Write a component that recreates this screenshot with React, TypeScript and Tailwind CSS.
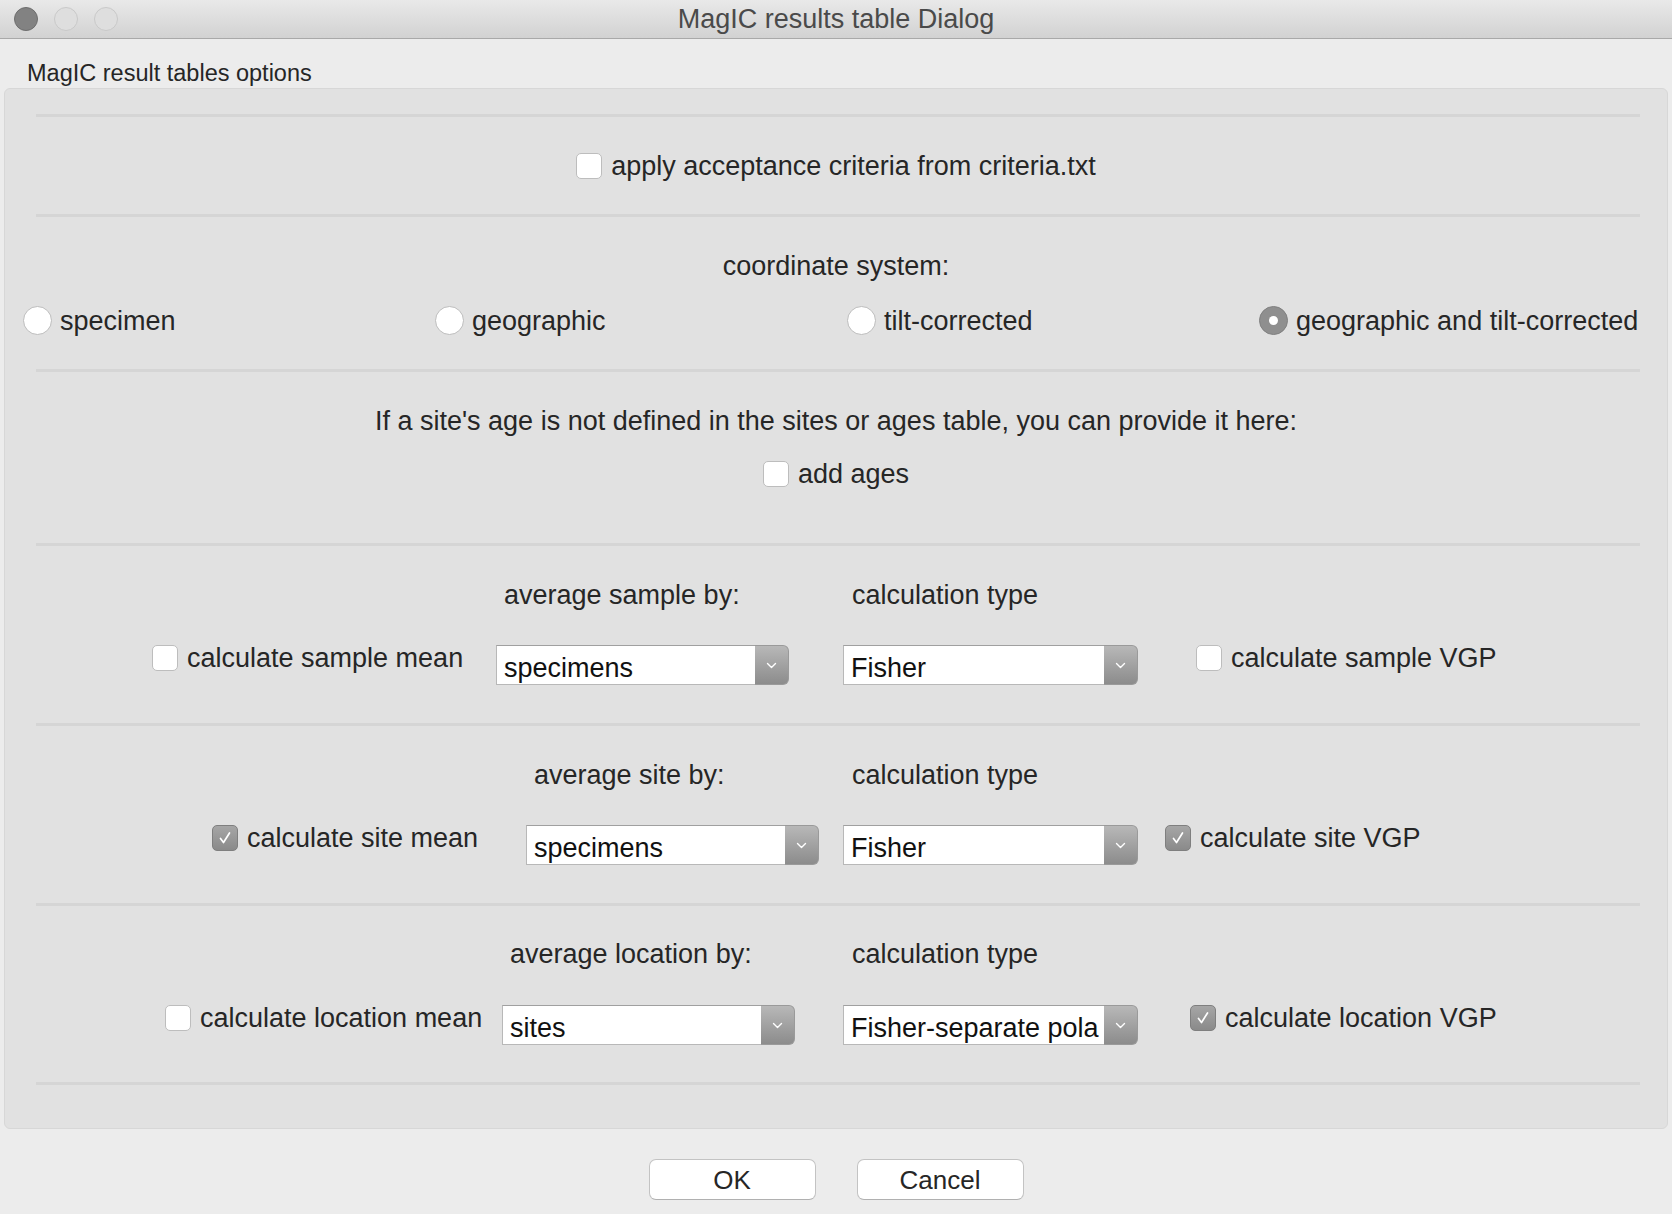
import React from "react";

function Box({ checked }: { checked?: boolean }) {
  if (checked) {
    return (
      <span className="flex h-[26px] w-[26px] shrink-0 items-center justify-center rounded-[5px] border border-[#7f7f7f] bg-linear-to-b from-[#a6a6a6] to-[#8a8a8a]">
        <svg width="16" height="16" viewBox="0 0 16 16">
          <path d="M3.5 8.5 L6.5 12.5 L12.5 3" fill="none" stroke="white" strokeWidth="1.7" strokeLinecap="round" strokeLinejoin="round" />
        </svg>
      </span>
    );
  }
  return <span className="h-[26px] w-[26px] shrink-0 rounded-[5px] border border-[#bdbdbd] bg-white" />;
}

function Check({ label, checked }: { label: string; checked?: boolean }) {
  return (
    <div className="flex h-[26px] items-center gap-[9px]">
      <Box checked={checked} />
      <span className="whitespace-nowrap text-[27px] leading-[30px]">{label}</span>
    </div>
  );
}

function Radio({ on, label }: { on?: boolean; label: string }) {
  return (
    <div className="flex h-[29px] items-center gap-[8px]">
      {on ? (
        <span className="flex h-[29px] w-[29px] shrink-0 items-center justify-center rounded-full border border-[#808080] bg-[#8f8f8f]">
          <span className="h-[9px] w-[9px] rounded-full bg-white" />
        </span>
      ) : (
        <span className="h-[29px] w-[29px] shrink-0 rounded-full border border-[#bcbcbc] bg-white" />
      )}
      <span className="whitespace-nowrap text-[27px] leading-[30px]">{label}</span>
    </div>
  );
}

function Select({ value, w }: { value: string; w: string }) {
  return (
    <div className={`flex h-[40px] shrink-0 ${w}`}>
      <div className="flex min-w-0 flex-1 items-end whitespace-nowrap border border-r-0 border-[#b8b8b8] border-t-[#a0a0a0] bg-white pl-[7px] text-[27px] leading-[32px] text-[#111]">
        {value}
      </div>
      <div className="flex w-[34px] shrink-0 items-center justify-center rounded-r-[6px] border border-l-0 border-[#9a9a9a] bg-linear-to-b from-[#b8b8b8] to-[#8c8c8c]">
        <svg width="11" height="7" viewBox="0 0 11 7">
          <path d="M1.5 1.5 L5.5 5.5 L9.5 1.5" fill="none" stroke="white" strokeWidth="1.4" strokeLinecap="round" strokeLinejoin="round" />
        </svg>
      </div>
    </div>
  );
}

function Sep() {
  return <div className="ml-[31px] mr-[27px] h-[3px] bg-[#d5d5d5]" />;
}

type RowSpec = {
  heading: string;
  hpl: string;
  hw: string;
  pl: string;
  g1w: string;
  meanLabel: string;
  meanChecked?: boolean;
  sel1: string;
  sp1: string;
  sel2: string;
  sp2: string;
  vgpLabel: string;
  vgpChecked?: boolean;
  h: string;
  pt: string;
  mt: string;
};

function ControlSection(r: RowSpec) {
  return (
    <div className={`flex flex-col ${r.h} ${r.pt}`}>
      <div className={`flex h-[32px] items-center ${r.hpl} text-[27px] leading-[32px]`}>
        <div className={`shrink-0 whitespace-nowrap ${r.hw}`}>{r.heading}</div>
        <div className="whitespace-nowrap">calculation type</div>
      </div>
      <div className={`flex items-start ${r.mt} ${r.pl}`}>
        <div className={`shrink-0 ${r.g1w}`}>
          <Check label={r.meanLabel} checked={r.meanChecked} />
        </div>
        <Select value={r.sel1} w="w-[293px]" />
        <div className={`shrink-0 ${r.sp1}`} />
        <Select value={r.sel2} w="w-[295px]" />
        <div className={`shrink-0 ${r.sp2}`} />
        <Check label={r.vgpLabel} checked={r.vgpChecked} />
      </div>
    </div>
  );
}

export default function App() {
  return (
    <div className="h-[1214px] w-[1672px] overflow-hidden bg-[#ececec] font-['Liberation_Sans',Arial,sans-serif] text-[#262626]">
      {/* Title bar */}
      <div className="grid h-[39px] grid-cols-[1fr_auto_1fr] items-center border-b border-[#a9a9a9] bg-linear-to-b from-[#e9e9e9] to-[#d2d2d2]">
        <div className="flex items-center gap-[16px] pl-[14px]">
          <span className="h-[24px] w-[24px] rounded-full border border-[#6e6e6e] bg-[#828282]" />
          <span className="h-[24px] w-[24px] rounded-full border border-[#c9c9c9] bg-[#dedede]" />
          <span className="h-[24px] w-[24px] rounded-full border border-[#c9c9c9] bg-[#dedede]" />
        </div>
        <div className="whitespace-nowrap text-[27px] leading-[32px] text-[#4a4a4a]">MagIC results table Dialog</div>
        <div />
      </div>

      {/* Group label */}
      <div className="pl-[27px] pt-[20px] text-[23.5px] leading-[28px]">MagIC result tables options</div>

      {/* Panel */}
      <div className="mx-[4px] mt-[1px] rounded-[6px] border border-[#d7d7d7] bg-[#e1e1e1] pb-[43px] pt-[25px]">
        <Sep />
        <div className="flex h-[97px] items-center justify-center">
          <Check label="apply acceptance criteria from criteria.txt" />
        </div>
        <Sep />
        <div className="flex h-[152px] flex-col pt-[33px]">
          <div className="h-[32px] text-center text-[27px] leading-[32px]">coordinate system:</div>
          <div className="mt-[24px] grid grid-cols-[412px_412px_412px_412px] pl-[18px]">
            <Radio label="specimen" />
            <Radio label="geographic" />
            <Radio label="tilt-corrected" />
            <Radio label="geographic and tilt-corrected" on />
          </div>
        </div>
        <Sep />
        <div className="flex h-[171px] flex-col items-center pt-[33px]">
          <div className="h-[32px] whitespace-nowrap text-center text-[27px] leading-[32px]">
            If a site's age is not defined in the sites or ages table, you can provide it here:
          </div>
          <div className="mt-[24px]">
            <Check label="add ages" />
          </div>
        </div>
        <Sep />
        <ControlSection
          heading="average sample by:"
          hpl="pl-[499px]"
          hw="w-[348px]"
          pl="pl-[147px]"
          g1w="w-[344px]"
          meanLabel="calculate sample mean"
          sel1="specimens"
          sp1="w-[54px]"
          sel2="Fisher"
          sp2="w-[58px]"
          vgpLabel="calculate sample VGP"
          h="h-[177px]"
          pt="pt-[33px]"
          mt="mt-[34px]"
        />
        <Sep />
        <ControlSection
          heading="average site by:"
          hpl="pl-[529px]"
          hw="w-[318px]"
          pl="pl-[207px]"
          g1w="w-[314px]"
          meanLabel="calculate site mean"
          meanChecked
          sel1="specimens"
          sp1="w-[24px]"
          sel2="Fisher"
          sp2="w-[27px]"
          vgpLabel="calculate site VGP"
          vgpChecked
          h="h-[177px]"
          pt="pt-[33px]"
          mt="mt-[34px]"
        />
        <Sep />
        <ControlSection
          heading="average location by:"
          hpl="pl-[505px]"
          hw="w-[342px]"
          pl="pl-[160px]"
          g1w="w-[337px]"
          meanLabel="calculate location mean"
          sel1="sites"
          sp1="w-[48px]"
          sel2="Fisher-separate pola"
          sp2="w-[52px]"
          vgpLabel="calculate location VGP"
          vgpChecked
          h="h-[176px]"
          pt="pt-[32px]"
          mt="mt-[35px]"
        />
        <Sep />
      </div>

      {/* Buttons */}
      <div className="mt-[30px] flex justify-center gap-[41px]">
        <button className="flex h-[41px] w-[167px] items-center justify-center rounded-[7px] border border-[#c3c3c3] border-b-[#b0b0b0] bg-white text-[26px] leading-[30px] text-[#262626]">
          OK
        </button>
        <button className="flex h-[41px] w-[167px] items-center justify-center rounded-[7px] border border-[#c3c3c3] border-b-[#b0b0b0] bg-white text-[26px] leading-[30px] text-[#262626]">
          Cancel
        </button>
      </div>
    </div>
  );
}
